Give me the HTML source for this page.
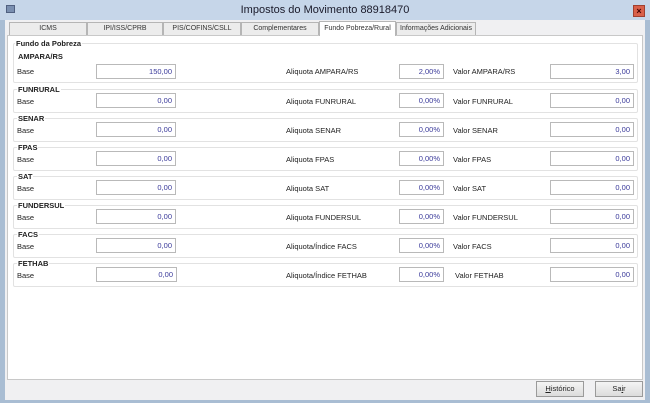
<!DOCTYPE html><html><head><style>
*{margin:0;padding:0;box-sizing:border-box}
body{width:650px;height:403px;background:#a9bdd3;font-family:"Liberation Sans",sans-serif;font-size:7.5px;color:#222;position:relative;overflow:hidden}
.abs{position:absolute;white-space:nowrap}
#title{left:0;top:0;width:650px;height:20px;background:#c6d6e9}
#client{left:5px;top:20px;width:640px;height:380px;background:#f0f0f2}
#panel{left:7px;top:35px;width:636px;height:345px;background:#fff;border:1px solid #c8c8c8}
.tab{top:22px;height:13px;border:1px solid #b5b5b5;border-bottom:none;background:#ececec;text-align:center;font-size:7px;line-height:12px;color:#333;overflow:hidden}
.grp{left:13px;width:625px;border:1px solid #e2e2e2;border-radius:2px}
.h{font-weight:bold;font-size:7.5px;background:#fff;padding:0 1px}
.inp{height:15px;border:1px solid #b9b9b9;background:#fff;color:#3a3a9a;text-align:right;padding-right:3px;line-height:13px;font-size:7.5px}
.btn{top:381px;height:16px;border:1px solid #9a9a9a;background:linear-gradient(#f4f4f4,#dcdcdc);text-align:center;line-height:14px;font-size:7.5px}
</style></head><body>
<div id="title" class="abs"></div>
<div class="abs" style="left:6px;top:5px;width:9px;height:8px;background:#7a8fb0;border:1px solid #506080"></div>
<div class="abs" style="left:0;top:4px;width:650px;text-align:center;font-size:11px;color:#1a1a2a">Impostos do Movimento 88918470</div>
<div class="abs" style="left:633px;top:5px;width:12px;height:12px;background:#d9604a;border:1px solid #a04030;color:#400;font-size:9px;font-weight:bold;text-align:center;line-height:10px">×</div>
<div id="client" class="abs"></div>
<div id="panel" class="abs"></div>
<div class="abs tab" style="left:9px;width:78px">ICMS</div>
<div class="abs tab" style="left:87px;width:76px">IPI/ISS/CPRB</div>
<div class="abs tab" style="left:163px;width:78px">PIS/COFINS/CSLL</div>
<div class="abs tab" style="left:241px;width:78px">Complementares</div>
<div class="abs tab" style="left:319px;width:77px;top:21px;height:15px;background:#fff;line-height:13px">Fundo Pobreza/Rural</div>
<div class="abs tab" style="left:396px;width:80px">Informações Adicionais</div>

<div class="abs grp" style="top:43px;height:40px"></div>
<div class="abs h" style="left:15px;top:39px">Fundo da Pobreza</div>
<div class="abs h" style="left:17px;top:52px">AMPARA/RS</div>

<div class="abs" style="left:17px;top:67px">Base</div>
<div class="abs inp" style="left:96px;top:64px;width:80px">150,00</div>
<div class="abs" style="left:286px;top:67px">Aliquota AMPARA/RS</div>
<div class="abs inp" style="left:399px;top:64px;width:45px">2,00%</div>
<div class="abs" style="left:453px;top:67px">Valor AMPARA/RS</div>
<div class="abs inp" style="left:550px;top:64px;width:84px">3,00</div>

<div class="abs grp" style="top:89px;height:24px"></div><div class="abs h" style="left:17px;top:85px">FUNRURAL</div>
<div class="abs" style="left:17px;top:97px">Base</div><div class="abs inp" style="left:96px;top:93px;width:80px">0,00</div>
<div class="abs" style="left:286px;top:97px">Aliquota FUNRURAL</div><div class="abs inp" style="left:399px;top:93px;width:45px">0,00%</div>
<div class="abs" style="left:453px;top:97px">Valor FUNRURAL</div><div class="abs inp" style="left:550px;top:93px;width:84px">0,00</div>

<div class="abs grp" style="top:118px;height:24px"></div><div class="abs h" style="left:17px;top:114px">SENAR</div>
<div class="abs" style="left:17px;top:126px">Base</div><div class="abs inp" style="left:96px;top:122px;width:80px">0,00</div>
<div class="abs" style="left:286px;top:126px">Aliquota SENAR</div><div class="abs inp" style="left:399px;top:122px;width:45px">0,00%</div>
<div class="abs" style="left:453px;top:126px">Valor SENAR</div><div class="abs inp" style="left:550px;top:122px;width:84px">0,00</div>

<div class="abs grp" style="top:147px;height:24px"></div><div class="abs h" style="left:17px;top:143px">FPAS</div>
<div class="abs" style="left:17px;top:155px">Base</div><div class="abs inp" style="left:96px;top:151px;width:80px">0,00</div>
<div class="abs" style="left:286px;top:155px">Aliquota FPAS</div><div class="abs inp" style="left:399px;top:151px;width:45px">0,00%</div>
<div class="abs" style="left:453px;top:155px">Valor FPAS</div><div class="abs inp" style="left:550px;top:151px;width:84px">0,00</div>

<div class="abs grp" style="top:176px;height:24px"></div><div class="abs h" style="left:17px;top:172px">SAT</div>
<div class="abs" style="left:17px;top:184px">Base</div><div class="abs inp" style="left:96px;top:180px;width:80px">0,00</div>
<div class="abs" style="left:286px;top:184px">Aliquota SAT</div><div class="abs inp" style="left:399px;top:180px;width:45px">0,00%</div>
<div class="abs" style="left:453px;top:184px">Valor SAT</div><div class="abs inp" style="left:550px;top:180px;width:84px">0,00</div>

<div class="abs grp" style="top:205px;height:24px"></div><div class="abs h" style="left:17px;top:201px">FUNDERSUL</div>
<div class="abs" style="left:17px;top:213px">Base</div><div class="abs inp" style="left:96px;top:209px;width:80px">0,00</div>
<div class="abs" style="left:286px;top:213px">Aliquota FUNDERSUL</div><div class="abs inp" style="left:399px;top:209px;width:45px">0,00%</div>
<div class="abs" style="left:453px;top:213px">Valor FUNDERSUL</div><div class="abs inp" style="left:550px;top:209px;width:84px">0,00</div>

<div class="abs grp" style="top:234px;height:24px"></div><div class="abs h" style="left:17px;top:230px">FACS</div>
<div class="abs" style="left:17px;top:242px">Base</div><div class="abs inp" style="left:96px;top:238px;width:80px">0,00</div>
<div class="abs" style="left:286px;top:242px">Aliquota/Índice FACS</div><div class="abs inp" style="left:399px;top:238px;width:45px">0,00%</div>
<div class="abs" style="left:453px;top:242px">Valor FACS</div><div class="abs inp" style="left:550px;top:238px;width:84px">0,00</div>

<div class="abs grp" style="top:263px;height:24px"></div><div class="abs h" style="left:17px;top:259px">FETHAB</div>
<div class="abs" style="left:17px;top:271px">Base</div><div class="abs inp" style="left:96px;top:267px;width:81px">0,00</div>
<div class="abs" style="left:286px;top:271px">Aliquota/Índice FETHAB</div><div class="abs inp" style="left:399px;top:267px;width:45px">0,00%</div>
<div class="abs" style="left:455px;top:271px">Valor FETHAB</div><div class="abs inp" style="left:550px;top:267px;width:84px">0,00</div>

<div class="abs btn" style="left:536px;width:48px"><u>H</u>istórico</div>
<div class="abs btn" style="left:595px;width:48px">Sa<u>i</u>r</div>
</body></html>
